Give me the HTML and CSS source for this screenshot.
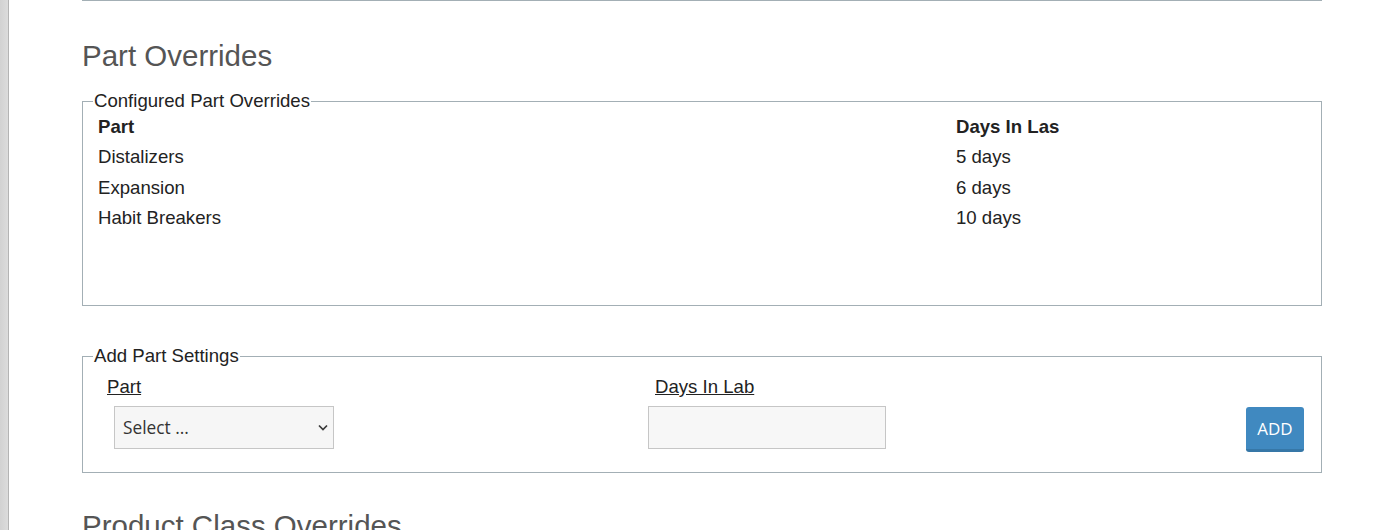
FILE: index.html
```html
<!DOCTYPE html>
<html lang="en">
<head>
    <meta charset="UTF-8">
    <meta name="viewport" content="width=device-width, initial-scale=1.0">
    <title>Part Overrides</title>

    <link rel="stylesheet" href="styles.css">
</head>
<body>
    <div class="page">
        <div class="sidebar"></div>

        <div class="main">
            <div class="top-rule"></div>

            <h2 class="section-title">Part Overrides</h2>

            <!-- Configured overrides -->
            <fieldset class="box">
                <legend>Configured Part Overrides</legend>
                <div class="overrides-list">
                    <div class="override-row header">
                        <span class="col-part">Part</span>
                        <span class="col-days">Days In Las</span>
                    </div>
                    <div class="override-row">
                        <span class="col-part">Distalizers</span>
                        <span class="col-days">5 days</span>
                    </div>
                    <div class="override-row">
                        <span class="col-part">Expansion</span>
                        <span class="col-days">6 days</span>
                    </div>
                    <div class="override-row">
                        <span class="col-part">Habit Breakers</span>
                        <span class="col-days">10 days</span>
                    </div>
                </div>
            </fieldset>

            <!-- Add new override -->
            <fieldset class="box add-box">
                <legend>Add Part Settings</legend>
                <div class="add-row">
                    <div class="field field-part">
                        <label for="part-select">Part</label>
                        <div class="select-wrap">
                            <select id="part-select">
                                <option>Select ...</option>
                                <option>Distalizers</option>
                                <option>Expansion</option>
                                <option>Habit Breakers</option>
                            </select>
                            <svg class="chevron" width="10" height="7" viewBox="0 0 10 7">
                                <path d="M1 1.5 L5 5.5 L9 1.5" fill="none" stroke="#3a3a3a" stroke-width="1.7"/>
                            </svg>
                        </div>
                    </div>
                    <div class="field field-days">
                        <label for="days-input">Days In Lab</label>
                        <input id="days-input" type="text">
                    </div>
                    <button class="btn-add">ADD</button>
                </div>
            </fieldset>

            <h2 class="section-title next">Product Class Overrides</h2>
        </div>
    </div>
</body>
</html>
```

FILE: styles.css
```css
body {
    margin: 0;
    background: #fff;
    font-family: 'Liberation Sans', Arial, sans-serif;
    color: #222;
    overflow: hidden;
}

.page {
    display: flex;
    min-height: 100vh;
}

.sidebar {
    width: 8px;
    background: linear-gradient(to right, #d2d2d2, #dcdcdc);
    border-right: 1px solid #b4b4b4;
    flex-shrink: 0;
}

.main {
    width: 1240px;
    padding-left: 73px;
}

.top-rule {
    border-top: 1px solid #a3afb5;
}

.section-title {
    margin: 38px 0 0;
    font-size: 29.5px;
    line-height: 34px;
    font-weight: normal;
    color: #555;
}

.section-title.next {
    margin-top: 36px;
}

/* Fieldsets */
.box {
    margin: 18px 0 0;
    padding: 1px 0 0;
    border: 1px solid #a3afb5;
    min-width: 0;
}

.box legend {
    font-size: 18.6px;
    line-height: 20px;
    padding: 0 1px;
    margin-left: 10px;
    color: #222;
}

.overrides-list {
    height: 193px;
}

.override-row {
    display: flex;
    font-size: 18.6px;
    line-height: 30.3px;
}

.override-row.header {
    font-weight: bold;
}

.col-part {
    width: 858px;
    padding-left: 15px;
}

/* Add form */
.add-box {
    margin-top: 40px;
    padding: 11px 0 20px;
}

.add-row {
    display: flex;
    align-items: flex-start;
}

.field label {
    display: block;
    font-size: 18.6px;
    line-height: 20px;
    text-decoration: underline;
    color: #222;
    margin-bottom: 9px;
}

.field-part {
    width: 548px;
    padding-left: 24px;
}

.select-wrap {
    position: relative;
    width: 220px;
    margin-left: 7px;
}

.select-wrap select {
    appearance: none;
    -webkit-appearance: none;
    width: 220px;
    height: 43px;
    padding: 0 8px;
    font-family: 'Open Sans', sans-serif;
    font-size: 17.3px;
    color: #333;
    background: #f6f6f6;
    border: 1px solid #c6c6c6;
    border-radius: 0;
    outline: none;
}

.chevron {
    position: absolute;
    right: 6px;
    top: 18px;
    pointer-events: none;
}

.field-days input {
    width: 238px;
    height: 43px;
    margin-left: -7px;
    box-sizing: border-box;
    background: #f7f7f7;
    border: 1px solid #c6c6c6;
    border-radius: 0;
    outline: none;
}

.btn-add {
    margin: 30px 17px 0 auto;
    width: 58px;
    height: 45px;
    padding: 0;
    border: none;
    border-bottom: 3px solid #3677a7;
    border-radius: 3px;
    background: #4089c0;
    color: #fff;
    font-family: 'Open Sans', sans-serif;
    font-size: 17px;
    cursor: pointer;
}

.btn-add:hover {
    background: #367db3;
}
```
